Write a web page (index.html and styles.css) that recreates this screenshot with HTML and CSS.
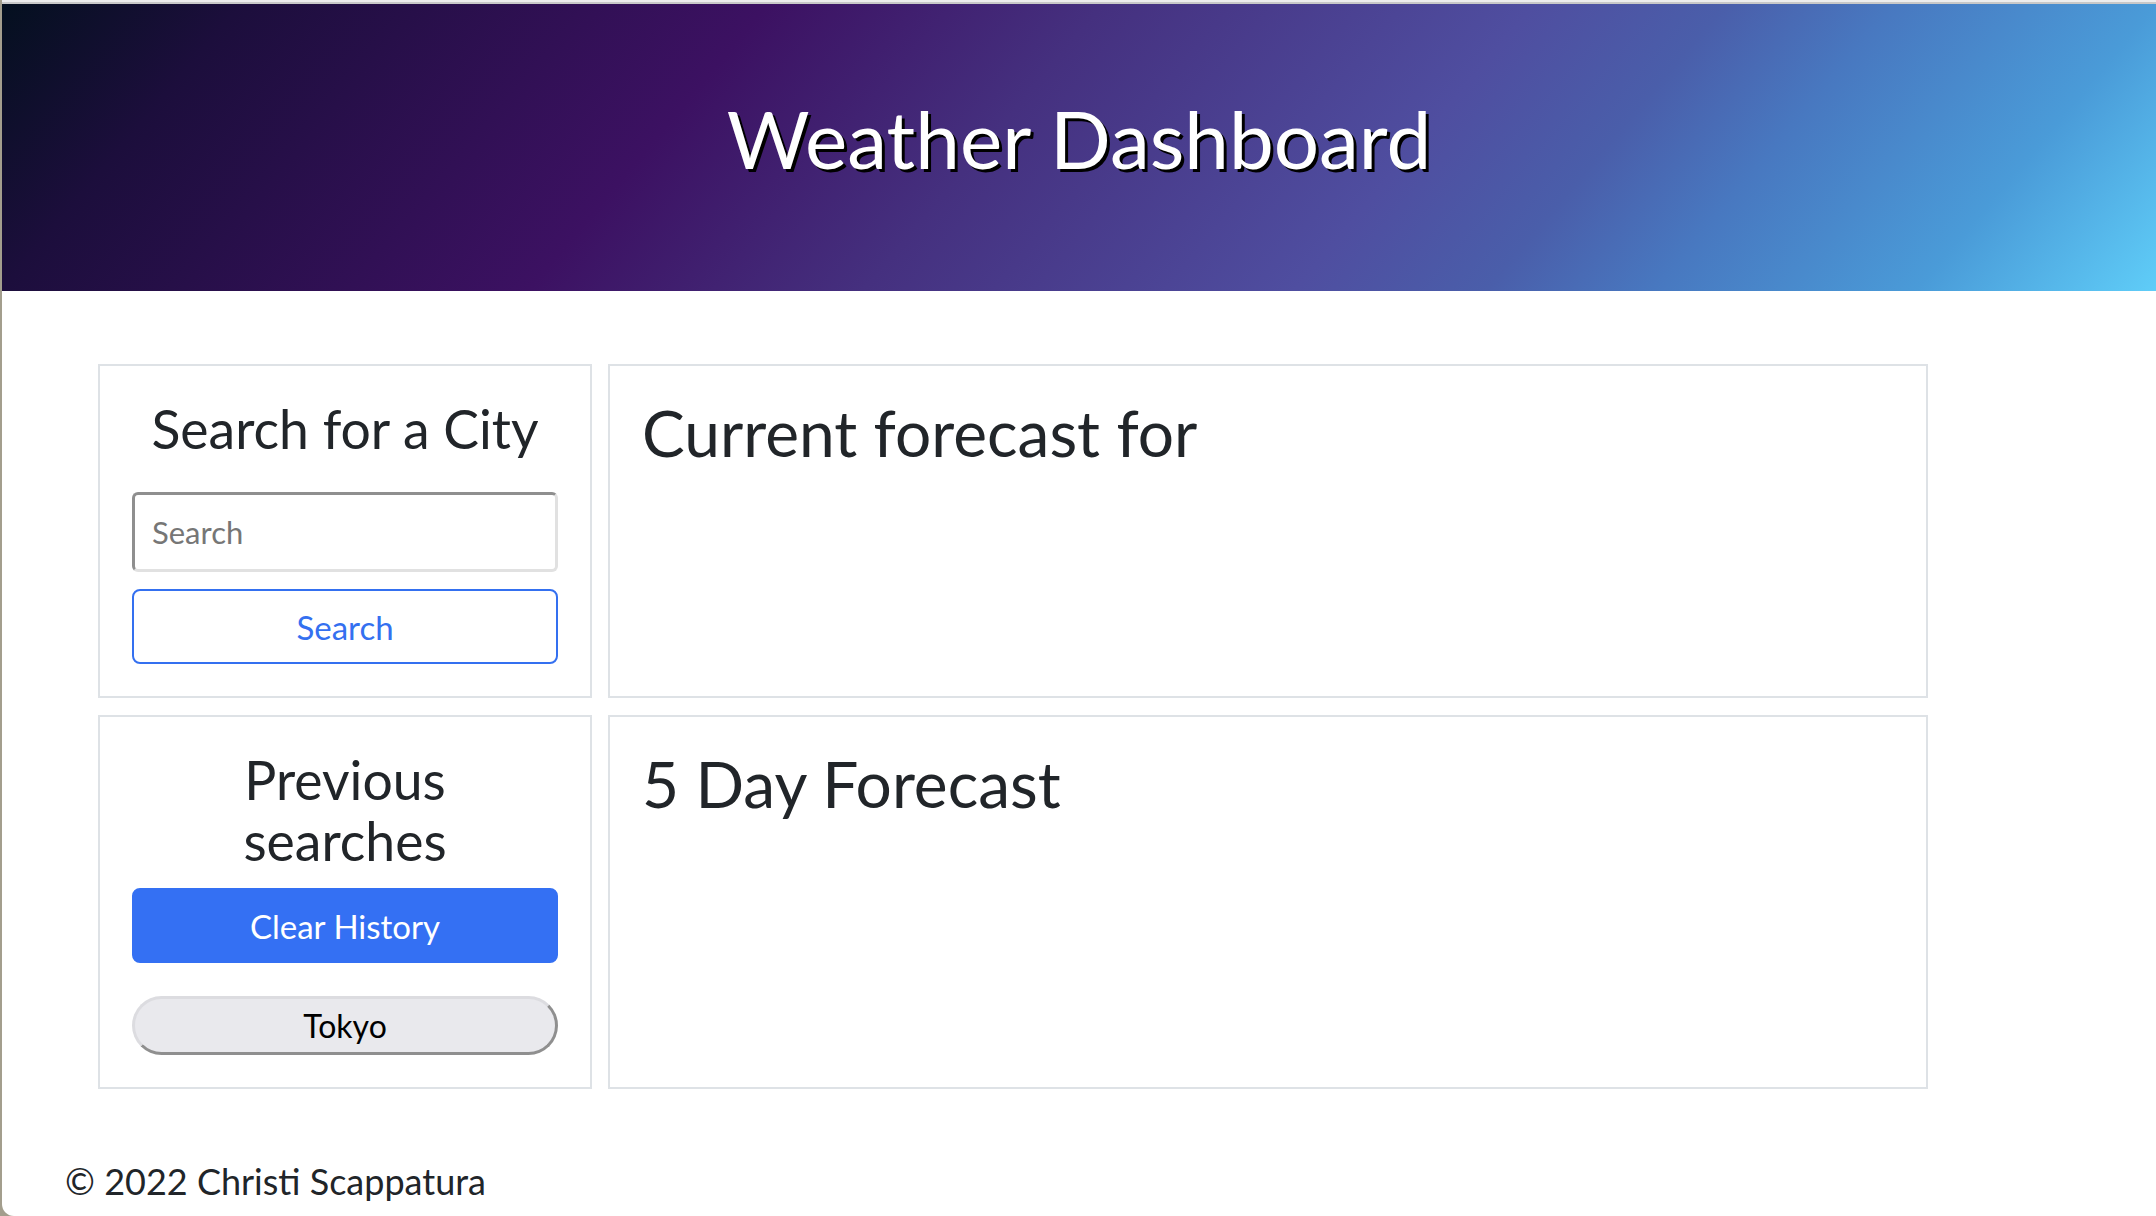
FILE: index.html
```html
<!DOCTYPE html>
<html lang="en">
<head>
<meta charset="utf-8">
<title>Weather Dashboard</title>
<link rel="stylesheet" href="styles.css">
</head>
<body>
<div class="window">
  <div class="chrome-line"></div>
  <header class="hero">
    <h1 class="hero-title">Weather Dashboard</h1>
  </header>
  <main class="dashboard">
    <section class="card card-side">
      <h3 class="card-heading">Search for a City</h3>
      <input class="search-input" type="text" placeholder="Search">
      <button class="btn btn-outline" type="button">Search</button>
    </section>
    <section class="card card-panel">
      <h2 class="panel-title">Current forecast for</h2>
    </section>
    <section class="card card-side">
      <h3 class="card-heading">Previous<br>searches</h3>
      <button class="btn btn-primary" type="button">Clear History</button>
      <button class="history-item" type="button">Tokyo</button>
    </section>
    <section class="card card-panel">
      <h2 class="panel-title">5 Day Forecast</h2>
    </section>
  </main>
  <footer class="footer">© 2022 Christi Scappatura</footer>
</div>
</body>
</html>
```

FILE: styles.css
```css
html {
  background: #a39e8d;
  overflow: hidden;
}

body {
  margin: 0;
  font-family: Lato, "Open Sans", sans-serif;
  color: #212529;
}

.window {
  margin-left: 2px;
  height: 1216px;
  background: #ffffff;
  border-bottom-left-radius: 12px;
  overflow: hidden;
}

.chrome-line {
  height: 4px;
  background: linear-gradient(#ededed 0 45%, #c8c8c8 45% 100%);
}

.hero {
  height: 287px;
  display: flex;
  align-items: center;
  justify-content: center;
  background: linear-gradient(130deg,
    #04101f 0%,
    #1c0e3c 10%,
    #3c1162 32%,
    #45307f 46%,
    #4f4ea0 64%,
    #4a5eaa 72%,
    #4878c0 79%,
    #4a9bd8 90%,
    #5fcdf8 100%);
}

.hero-title {
  margin: 0 0 20px;
  font-size: 80px;
  font-weight: 400;
  line-height: 1.2;
  color: #ffffff;
  text-shadow: 3px 3px 0 #000000;
}

.dashboard {
  display: grid;
  grid-template-columns: 494px 1320px;
  column-gap: 16px;
  row-gap: 17px;
  padding: 73px 0 0 96px;
}

.card {
  box-sizing: border-box;
  border: 2px solid #dee2e6;
  background: #ffffff;
}

.card-side {
  display: flex;
  flex-direction: column;
  padding: 32px;
}

.card-heading {
  margin: 0 0 33px;
  font-size: 53.5px;
  font-weight: 400;
  line-height: 61px;
  text-align: center;
}

.card-side .card-heading + .btn-primary {
  margin-top: -16px;
}

.card-panel {
  padding: 29px 32px 32px;
}

.panel-title {
  margin: 0;
  font-size: 64px;
  font-weight: 400;
  line-height: 1.2;
}

.search-input {
  box-sizing: border-box;
  height: 80px;
  width: 100%;
  margin: 0;
  padding: 0 17px;
  border: 3px solid;
  border-color: #8f8f8f #e1e1e1 #e1e1e1 #8f8f8f;
  border-radius: 6px;
  font-family: inherit;
  font-size: 31px;
  color: #212529;
  outline: none;
}

.search-input::placeholder {
  color: #767676;
}

.btn {
  box-sizing: border-box;
  width: 100%;
  height: 75px;
  border-radius: 8px;
  font-family: inherit;
  font-size: 33px;
  cursor: pointer;
}

.btn-outline {
  margin-top: 17px;
  border: 2px solid #3470f0;
  background: #ffffff;
  color: #3470f0;
}

.btn-primary {
  border: 2px solid #3470f3;
  background: #3470f3;
  color: #ffffff;
}

.history-item {
  box-sizing: border-box;
  width: 100%;
  height: 59px;
  margin-top: 33px;
  border: 3px solid;
  border-color: #dcdce0 #8f8f8f #8f8f8f #dcdce0;
  border-radius: 30px;
  background: #e9e9ed;
  font-family: inherit;
  font-size: 32px;
  color: #000000;
  cursor: pointer;
}

.footer {
  padding: 67px 0 0 63px;
  font-size: 36px;
  line-height: 51px;
}
```
